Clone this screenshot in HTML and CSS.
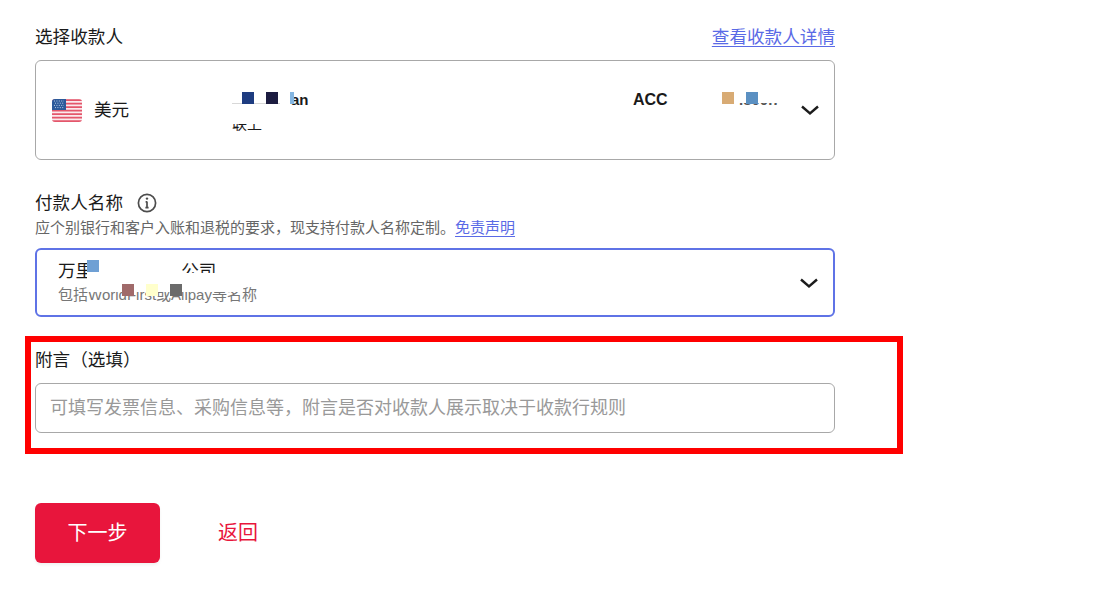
FILE: index.html
```html
<!DOCTYPE html>
<html lang="zh-CN">
<head>
<meta charset="utf-8">
<title>选择收款人</title>
<link rel="stylesheet" href="styles.css">
</head>
<body>
<main class="form">
  <div class="label-row">
    <span class="label">选择收款人</span>
    <a class="detail-link" href="#">查看收款人详情</a>
  </div>
  <div class="select select-payee">
    <svg class="flag" width="30" height="23" viewBox="0 0 30 23" aria-hidden="true">
      <defs><clipPath id="flag-clip"><rect width="30" height="23" rx="3"/></clipPath></defs>
      <g clip-path="url(#flag-clip)">
        <rect width="30" height="23" fill="#fbe9ec"/>
        <path d="M0 1.2h30M0 4.7h30M0 8.2h30M0 11.7h30M0 15.2h30M0 18.7h30M0 22.2h30" stroke="#e4566b" stroke-width="1.7"/>
        <rect width="14" height="11" fill="#2c5a9a"/>
        <path d="M2 2h10M3 4.2h9M2 6.4h10M3 8.6h9" stroke="#b9cbe4" stroke-width="1" stroke-dasharray="1 1.4"/>
      </g>
    </svg>
    <span class="currency">美元</span>
    <div class="payee-name">
      <span class="name-line">an</span>
      <span class="name-trace"></span>
      <span class="swatch sw-navy"></span>
      <span class="swatch sw-ink"></span>
      <span class="swatch sw-sky"></span>
      <span class="name-second">联上</span>
      <span class="mask mask-second"></span>
    </div>
    <div class="account">
      <span class="account-text">ACC</span>
      <span class="account-tail">.800.7</span>
      <span class="mask mask-tail"></span>
      <span class="swatch sw-tan"></span>
      <span class="swatch sw-steel"></span>
    </div>
    <svg class="chevron" width="20" height="12" viewBox="0 0 20 12" aria-hidden="true"><path d="M2 2.5l8 7 8-7" fill="none" stroke="#1c1c1c" stroke-width="2.4"/></svg>
  </div>

  <div class="label-row label-gap">
    <span class="label">付款人名称</span>
    <svg class="info" width="20" height="20" viewBox="0 0 20 20" aria-hidden="true">
      <circle cx="10" cy="10" r="8.6" fill="none" stroke="#4d4d4d" stroke-width="1.7"/>
      <path d="M10 8.6v6M8.4 14.6h3.2M8.6 8.8H10" fill="none" stroke="#4d4d4d" stroke-width="1.7"/>
      <circle cx="10" cy="5.6" r="1.2" fill="#4d4d4d"/>
    </svg>
  </div>
  <p class="hint">应个别银行和客户入账和退税的要求&#xFF0C;现支持付款人名称定制。<a class="hint-link" href="#">免责声明</a></p>
  <div class="select select-payer">
    <div class="payer-text">
      <span class="payer-name">万里汇信息技术公司</span>
      <span class="payer-sub">包括WorldFirst或Alipay等名称</span>
    </div>
    <span class="mask mask-name"></span>
    <span class="mask mask-sub"></span>
    <span class="swatch sw-blue"></span>
    <span class="swatch sw-rose"></span>
    <span class="swatch sw-cream"></span>
    <span class="swatch sw-gray"></span>
    <svg class="chevron" width="20" height="12" viewBox="0 0 20 12" aria-hidden="true"><path d="M2 2.5l8 7 8-7" fill="none" stroke="#1c1c1c" stroke-width="2.4"/></svg>
  </div>

  <div class="label-row label-gap">
    <span class="label">附言&#xFF08;选填&#xFF09;</span>
  </div>
  <input class="note" type="text" placeholder="可填写发票信息、采购信息等&#xFF0C;附言是否对收款人展示取决于收款行规则">

  <div class="actions">
    <button class="next" type="button">下一步</button>
    <a class="back" href="#">返回</a>
  </div>
</main>
<div class="highlight"></div>
</body>
</html>
```

FILE: styles.css
```css
* {
  box-sizing: border-box;
}

html,
body {
  margin: 0;
  height: 100%;
  overflow: hidden;
  background: #fff;
}

body {
  position: relative;
  font-family: "Liberation Sans", "Noto Sans CJK SC", sans-serif;
  color: #1a1a1a;
}

.form {
  width: 800px;
  margin-left: 35px;
  padding-top: 25px;
}

.label-row {
  display: flex;
  align-items: center;
  height: 24px;
}

.label-gap {
  margin-top: 31px;
}

.label {
  font-size: 17.6px;
  line-height: 24px;
}

.detail-link {
  margin-left: auto;
  font-size: 17.6px;
  line-height: 24px;
  color: #5a6ae6;
  text-decoration: underline;
  text-underline-offset: 3px;
}

.info {
  margin-left: 14px;
}

.select {
  position: relative;
  display: flex;
  align-items: center;
  width: 800px;
  background: #fff;
}

.select-payee {
  height: 100px;
  margin-top: 11px;
  padding: 0 14px 0 16px;
  border: 1px solid #a8a8a8;
  border-radius: 6px;
}

.flag {
  flex: none;
}

.currency {
  margin-bottom: 4px;
  margin-left: 12px;
  font-size: 17.6px;
}

.chevron {
  flex: none;
  margin-left: auto;
}

.payee-name {
  position: absolute;
  left: 196px;
  top: 30px;
  width: 90px;
  height: 46px;
}

.name-line {
  position: absolute;
  left: 59px;
  top: 0;
  font-size: 15px;
  font-weight: 700;
  line-height: 18px;
}

.name-trace {
  position: absolute;
  left: 0;
  top: 12px;
  width: 48px;
  height: 1px;
  background: #d8d8d8;
}

.name-second {
  position: absolute;
  left: 0;
  top: 23px;
  font-size: 15px;
  line-height: 20px;
}

.mask-second {
  left: 0;
  top: 20px;
  width: 34px;
  height: 13px;
}

.account {
  position: absolute;
  left: 597px;
  top: 30px;
  width: 150px;
  height: 20px;
}

.account-text {
  display: block;
  font-size: 16px;
  font-weight: 700;
  line-height: 18px;
}

.account-tail {
  position: absolute;
  left: 106px;
  top: 0;
  font-size: 15px;
  font-weight: 700;
  line-height: 18px;
  color: #555;
}

.mask-tail {
  left: 100px;
  top: 0;
  width: 50px;
  height: 12px;
}

.mask {
  position: absolute;
  background: #fff;
}

.swatch {
  position: absolute;
  width: 12px;
  height: 12px;
}

.sw-navy {
  left: 10px;
  top: 1px;
  background: #1e3c80;
}

.sw-ink {
  left: 34px;
  top: 1px;
  background: #1c1c40;
}

.sw-sky {
  left: 58px;
  top: 1px;
  width: 4px;
  background: #84b6e2;
}

.sw-tan {
  left: 89px;
  top: 1px;
  background: #d8ab74;
}

.sw-steel {
  left: 113px;
  top: 1px;
  background: #5b90c2;
}

.hint {
  margin: 3px 0 0;
  font-size: 15px;
  line-height: 20px;
  color: #666;
}

.hint-link {
  color: #5a6ae6;
  text-decoration: underline;
  text-underline-offset: 3px;
}

.select-payer {
  height: 69px;
  margin-top: 10px;
  padding: 0 14px 0 21px;
  border: 2px solid #5f73e6;
  border-radius: 6px;
}

.payer-text {
  display: flex;
  flex-direction: column;
  gap: 2px;
}

.payer-name {
  font-size: 17.6px;
  line-height: 22px;
}

.payer-sub {
  font-size: 15px;
  line-height: 22px;
  color: #777;
}

.mask-name {
  left: 50px;
  top: 8px;
  width: 94px;
  height: 24px;
}

.mask-sub {
  left: 50px;
  top: 23px;
  width: 156px;
  height: 19px;
}

.sw-blue {
  left: 50px;
  top: 10px;
  background: #6fa0d4;
}

.sw-rose {
  left: 85px;
  top: 34px;
  background: #a06a6a;
}

.sw-cream {
  left: 109px;
  top: 34px;
  background: #ffffcc;
}

.sw-gray {
  left: 133px;
  top: 34px;
  background: #6b6b6b;
}

.note {
  display: block;
  width: 800px;
  height: 50px;
  margin-top: 11px;
  padding: 0 14px;
  border: 1px solid #a8a8a8;
  border-radius: 6px;
  outline: none;
  font: inherit;
  font-size: 18px;
  color: #1a1a1a;
}

.note::placeholder {
  color: #999;
  opacity: 1;
}

.actions {
  display: flex;
  align-items: center;
  gap: 58px;
  margin-top: 70px;
}

.next {
  width: 125px;
  height: 60px;
  padding: 0 0 3px;
  border: 0;
  border-radius: 6px;
  background: #e8153c;
  box-shadow: 0 2px 3px rgba(0, 0, 0, 0.06);
  font: inherit;
  font-size: 20px;
  color: #fff;
}

.back {
  padding-bottom: 4px;
  font-size: 20px;
  color: #e8153c;
  text-decoration: none;
}

.highlight {
  position: absolute;
  left: 25px;
  top: 336px;
  width: 878px;
  height: 118px;
  border: 6.5px solid #ff0000;
  pointer-events: none;
}
```
